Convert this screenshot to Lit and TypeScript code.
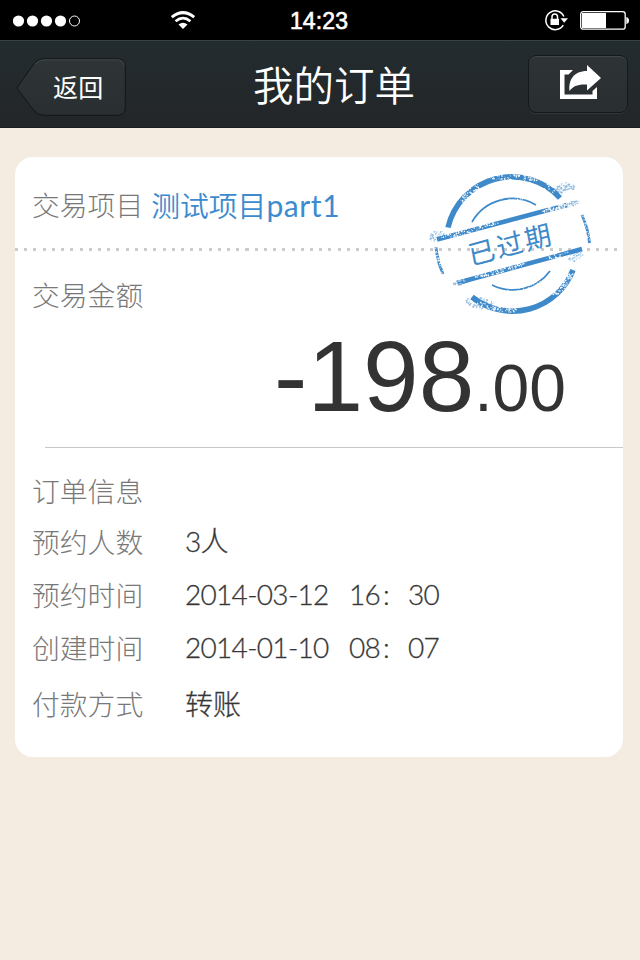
import { LitElement, html, svg, css } from "lit";
import { customElement } from "lit/decorators.js";

const cjk = css`"Noto Sans CJK SC", sans-serif`;

@customElement("status-bar")
class StatusBar extends LitElement {
  static styles = css`
    :host {
      display: grid;
      grid-template-columns: 1fr auto 1fr;
      align-items: center;
      height: 40px;
      background: #000;
      color: #fff;
    }
    .left { display: flex; align-items: center; padding-left: 13px; }
    .right { display: flex; align-items: center; justify-content: flex-end; }
    .signal { width: 68px; height: 12px; margin-top: 1px; }
    .wifi { width: 24px; height: 18px; margin-left: 90px; }
    .clock {
      font: 400 23px/40px "Liberation Sans", sans-serif;
      -webkit-text-stroke: 0.6px #fff;
      width: 60px;
      letter-spacing: 0.1px;
      padding-top: 1px;
      box-sizing: border-box;
      height: 40px;
      text-align: center;
      margin-left: -2px;
    }
    .lock { width: 24px; height: 22px; margin-right: 12px; }
    .battery { width: 50px; height: 20px; margin-right: 10px; }
    svg { display: block; }
  `;

  render() {
    return html`
      <div class="left">
        <svg class="signal" viewBox="0 0 68 12" fill="#fff">
          ${[5.5, 19.5, 33.5, 47.5].map((x) => svg`<circle cx=${x} cy="6" r="5.6"/>`)}
          <circle cx="61.5" cy="6" r="5" fill="none" stroke="#fff" stroke-width="1"/>
        </svg>
        <svg class="wifi" viewBox="0 0 24 18" fill="none" stroke="#fff" stroke-width="3">
          <path d="M.8 6.2Q12-3 23.200 6.200" />
          <path d="M4.600 10.200Q12 4 19.400 10.200" stroke-width="2.800"/>
          <path d="M12 18L7.500 13.500Q12 10 16.500 13.500Z" fill="#fff" stroke="none"/>
        </svg>
      </div>
      <div class="clock">14:23</div>
      <div class="right">
        <svg class="lock" viewBox="0 0 24 22" fill="none" stroke="#fff">
          <path d="M19.300 16.200A9.400 9.400 0 1 1 19.900 7.500" stroke-width="1.500"/>
          <path d="M16.500 9.300H24L20.200 13.800Z" fill="#fff" stroke="none"/>
          <rect x="6.500" y="9.800" width="8.500" height="6.200" fill="#fff" stroke="none"/>
          <path d="M8 10.500V7.800a2.750 2.750 0 0 1 5.500 0V10.500" stroke-width="1.500"/>
        </svg>
        <svg class="battery" viewBox="0 0 50 20" fill="#fff">
          <rect x="0.700" y="1.700" width="44.500" height="17.500" rx="2.500" fill="none" stroke="#fff" stroke-width="1.300"/>
          <rect x="2" y="3" width="24" height="15"/>
          <path d="M46.300 7q2.700 .5 2.700 3.500t-2.700 3.500z"/>
        </svg>
      </div>
    `;
  }
}

@customElement("nav-bar")
class NavBar extends LitElement {
  static styles = css`
    :host {
      display: grid;
      grid-template-columns: 128px 1fr 128px;
      height: 88px;
      box-sizing: border-box;
      background: linear-gradient(#232c2f, #232628);
      border-top: 1px solid #384144;
      border-bottom: 1px solid #1a1c1d;
      color: #fff;
      font-family: ${cjk};
    }
    .back {
      position: relative;
      display: flex;
      width: 110px;
      height: 58px;
      margin: 17px 0 0 16px;
    }
    .shape { position: absolute; inset: 0; }
    .back-label {
      position: relative;
      margin-left: 37px;
      font-size: 25px;
      font-weight: 400;
      line-height: 57px;
      letter-spacing: 0.3px;
    }
    .title {
      text-align: center;
      font-size: 40.500px;
      line-height: 85px;
      font-weight: 350;
      margin-left: 20px;
      margin-right: -8px;
    }
    .share {
      width: 98px;
      height: 56px;
      margin: 14px 0 0 16px;
      border: 1px solid #15191a;
      border-radius: 8px;
      background: linear-gradient(#2e3336, #292e30);
      box-shadow: inset 0 1px 0 #40474a, 0 1px 0 #303537;
    }
    .share svg { display: block; }
  `;

  render() {
    return html`
      <div class="back">
        <svg class="shape" width="110" height="58" viewBox="0 0 110 58">
          <defs>
            <linearGradient id="face" x2="0" y2="1">
              <stop stop-color="#2f3437"/><stop offset="1" stop-color="#292e30"/>
            </linearGradient>
          </defs>
          <path d="M.8 30L17 7Q21.500 .8 28 .8H101.500Q109.300 .8 109.300 8.500V49.500Q109.300 57.300 101.500 57.300H28Q22 57.300 17.500 52Z"
            fill="url(#face)" stroke="#121617"/>
          <path d="M19 6Q23 1.900 28 1.900H101Q107 1.900 108 7" fill="none" stroke="#41484b"/>
        </svg>
        <span class="back-label">返回</span>
      </div>
      <div class="title">我的订单</div>
      <div class="share">
        <svg width="98" height="56" viewBox="529 56 98 56" fill="#fff">
          <path d="M573 70H560V99H597V87L592.500 91V94.500H564.500V74.500H568.500Z"/>
          <path d="M587 65L601 78L587 90.500V84.500C578 84 573 86 569.500 91C568.500 80 573.500 71 587 71Z"/>
        </svg>
      </div>
    `;
  }
}

/** Deterministic pseudo-random source, so that the worn ink always looks the same. */
const random = (seed: number) => () => {
  seed = (seed * 1664525 + 1013904223) % 4294967296;
  return seed / 4294967296;
};

type Patch = [cx: number, cy: number, rx: number, ry: number, angle: number, count: number];

const specks = (patches: Patch[], seed: number, size: number) => {
  const next = random(seed);
  return patches.flatMap(([cx, cy, rx, ry, angle, count]) =>
    Array.from({ length: count }, () => {
      const t = next() * Math.PI * 2;
      const d = Math.sqrt(next());
      const a = (angle * Math.PI) / 180;
      const u = Math.cos(t) * d * rx;
      const v = Math.sin(t) * d * ry;
      const x = cx + u * Math.cos(a) - v * Math.sin(a);
      const y = cy + u * Math.sin(a) + v * Math.cos(a);
      return svg`<circle cx=${x.toFixed(1)} cy=${y.toFixed(1)} r=${(size * (0.5 + next())).toFixed(2)}/>`;
    })
  );
};

const ink: Patch[] = [
  [139, 23, 11, 5, -10, 110],
  [12, 71, 8, 5, -15, 60],
  [55, 138, 14, 6, 10, 120],
  [150, 90, 8, 6, -15, 60],
  [36, 117, 8, 3, -15, 60],
  [146, 39, 9, 3, -15, 50],
];

const wear: Patch[] = [
  [45, 29, 13, 5, -42, 90],
  [88, 13, 26, 4, 3, 90],
  [118, 20, 14, 4, 28, 25],
  [45, 65, 30, 3, -15, 100],
  [130, 43, 14, 3, -15, 120],
  [75, 105, 26, 3, -15, 120],
  [133, 90, 12, 3, -15, 40],
  [33, 117, 8, 3, -15, 40],
  [138, 119, 15, 4, -50, 120],
  [72, 142, 20, 4, 10, 100],
  [161, 64, 3, 15, -15, 40],
  [14, 95, 3, 17, -12, 60],
  [80, 33, 22, 2, 0, 26],
  [100, 122, 25, 3, -15, 40],
];

@customElement("expired-stamp")
class ExpiredStamp extends LitElement {
  static styles = css`
    :host { display: block; width: 180px; height: 160px; }
    svg { display: block; }
    .label {
      font: 400 27px ${cjk};
      fill: #3d89ca;
    }
  `;

  render() {
    return html`
      <svg width="180" height="160" viewBox="0 0 180 160">
        <defs>
          <mask id="worn" maskUnits="userSpaceOnUse" x="0" y="0" width="180" height="160">
            <rect width="180" height="160" fill="#fff"/>
            <g fill="#000">${specks(wear, 11, 0.55)}</g>
          </mask>
        </defs>
        <g mask="url(#worn)" fill="none" stroke="#3d89ca">
          <path d="M23 62.500A65.500 65.500 0 0 1 135 33" stroke-width="5.500"/>
          <path d="M47 132A65 65 0 0 0 148 105" stroke-width="5.500"/>
          <path d="M47 57A46.500 46.500 0 0 1 111 40" stroke-width="1.800"/>
          <path d="M67 120A46.500 46.500 0 0 0 125 106" stroke-width="1.800"/>
          <path d="M12 74.500L142 40" stroke-width="4.500"/>
          <path d="M32 118L157 84" stroke-width="4.500"/>
          <path d="M11 82Q12.500 97 18 109" stroke-width="2.800"/>
          <path d="M157 50Q163 63 164.500 78" stroke-width="2.800"/>
        </g>
        <g fill="#3d89ca" opacity=".6">${specks(ink, 5, 0.55)}</g>
        <text class="label" transform="translate(85.500 79.500) rotate(-15) skewX(-4)" x="0" y="10"
          text-anchor="middle" letter-spacing="2">已过期</text>
      </svg>
    `;
  }
}

@customElement("app-root")
class AppRoot extends LitElement {
  static styles = css`
    :host {
      display: block;
      height: 960px;
      overflow: hidden;
      background: #f4ece0;
      font-family: Lato, ${cjk};
      font-weight: 300;
    }
    .card {
      position: relative;
      display: flex;
      flex-direction: column;
      margin: 29px 17px 0 15px;
      height: 600px;
      border-radius: 18px;
      background: #fff;
    }
    .label { color: #787878; font-family: ${cjk}; font-size: 27.800px; }
    .project {
      display: flex;
      gap: 8px;
      height: 91px;
      padding: 0 17px;
      line-height: 95px;
      white-space: nowrap;
    }
    .name { color: #3d8bcf; font-size: 28.800px; font-family: ${cjk}; font-weight: 350; }
    .latin { font-family: Lato, sans-serif; font-size: 30px; font-weight: 400; letter-spacing: 0.600px; }
    .perforation {
      height: 3px;
      background: repeating-linear-gradient(90deg, #ccc 0 3px, transparent 3px 9.220px);
    }
    .amount { height: 196px; padding: 20px 17px 0; box-sizing: border-box; line-height: 46px; }
    .value {
      margin: 9px 40px 0 0;
      text-align: right;
      white-space: nowrap;
      color: #333;
      font-family: "Liberation Sans", Arial, sans-serif;
      font-weight: 400;
      font-size: 100px;
      line-height: 100px;
    }
    .cents { font-size: 66px; }
    .rule { height: 1px; margin-left: 30px; background: #c8c8c8; }
    .details {
      display: grid;
      grid-template-columns: 153px 1fr;
      grid-template-rows: 51px 53px 53px 56px 54px;
      margin: 16px 0 0 17px;
      line-height: 53px;
      white-space: pre;
    }
    .heading { grid-column: 1 / 3; }
    .data {
      color: #333;
      font-size: 28px;
      -webkit-text-stroke: 0.3px #444;
    }
    .method { padding-top: 1px; }
    .figures {
      font-family: Lato, ${cjk};
      letter-spacing: -0.700px;
    }
    .moment { display: grid; grid-template-columns: 164px 34px 25px 1fr; }
    .stamp { position: absolute; left: 410px; top: 8px; }
  `;

  private moment(date: string, hour: string, minute: string) {
    return html`<span class="data figures moment"><span>${date}</span><span>${hour}</span><span>:</span><span>${minute}</span></span>`;
  }

  render() {
    return html`
      <status-bar></status-bar>
      <nav-bar></nav-bar>
      <main class="card">
        <div class="project">
          <span class="label">交易项目</span>
          <span class="name">测试项目<span class="latin">part1</span></span>
        </div>
        <div class="perforation"></div>
        <div class="amount">
          <div class="label">交易金额</div>
          <div class="value">-198<span class="cents">.00</span></div>
        </div>
        <div class="rule"></div>
        <div class="details">
          <span class="label heading">订单信息</span>
          <span class="label">预约人数</span><span class="data"><span class="figures">3</span>人</span>
          <span class="label">预约时间</span>${this.moment("2014-03-12", "16", "30")}
          <span class="label">创建时间</span>${this.moment("2014-01-10", "08", "07")}
          <span class="label">付款方式</span><span class="data method">转账</span>
        </div>
        <expired-stamp class="stamp"></expired-stamp>
      </main>
    `;
  }
}
